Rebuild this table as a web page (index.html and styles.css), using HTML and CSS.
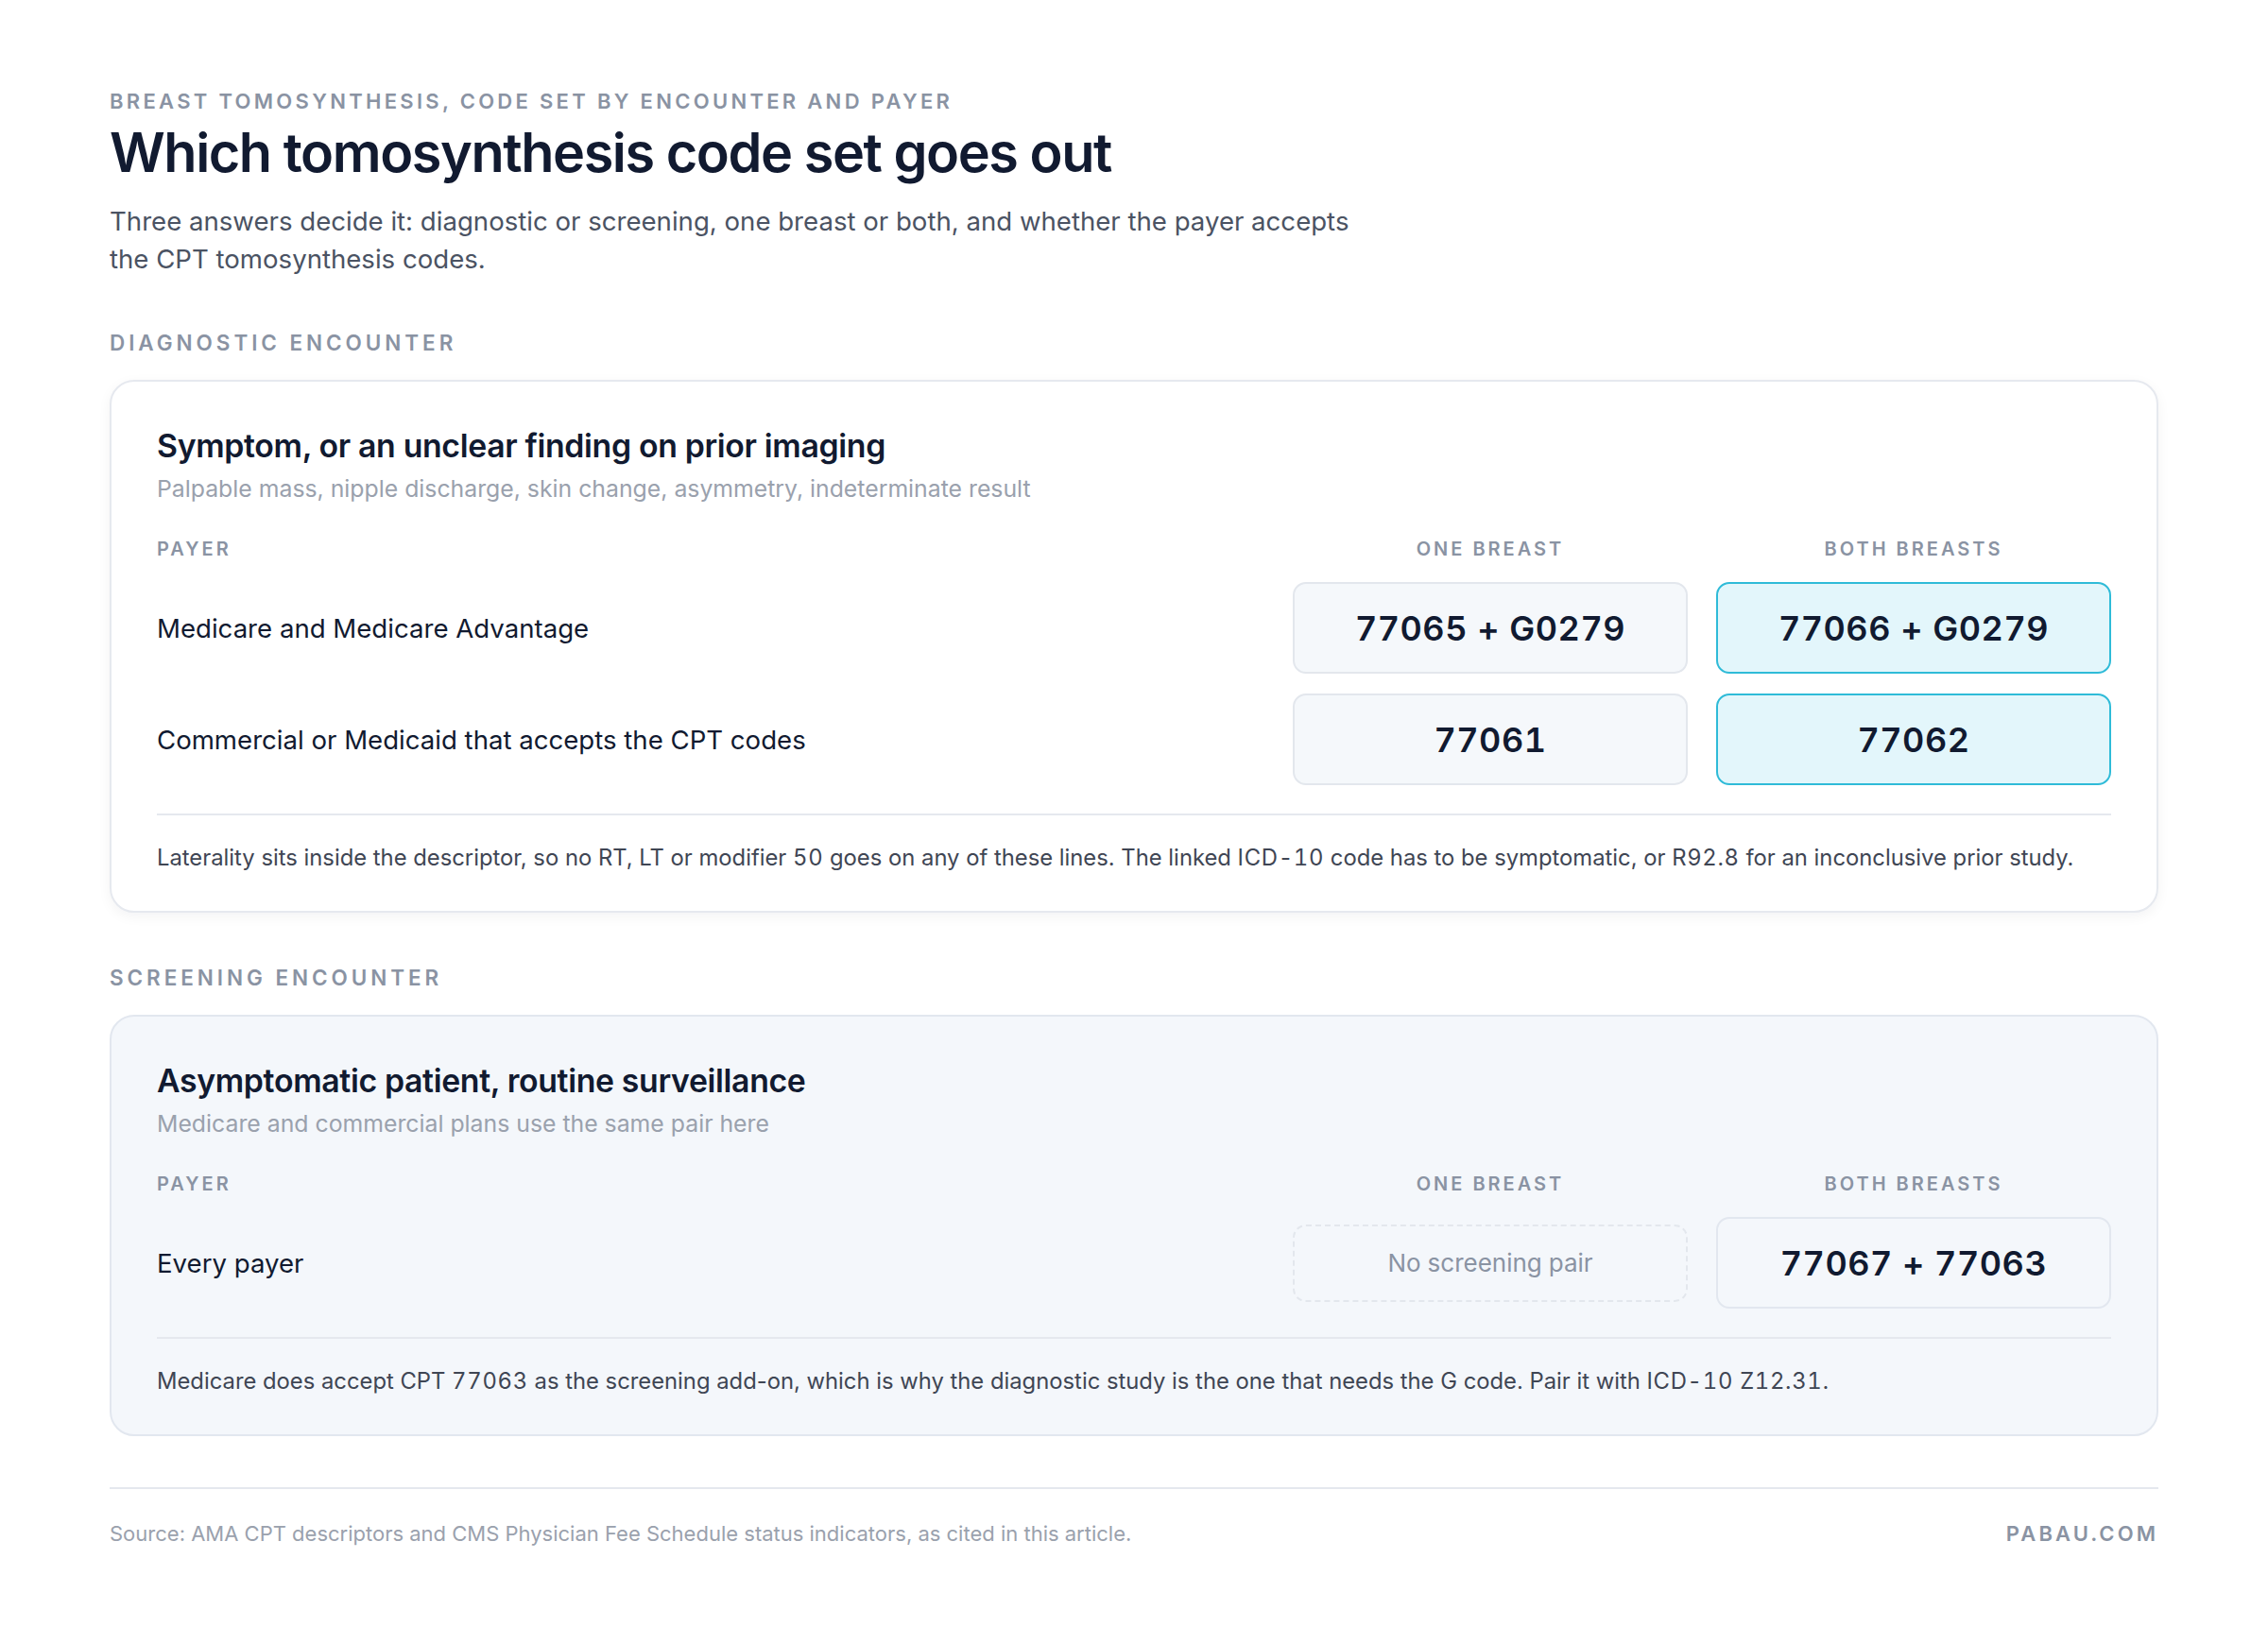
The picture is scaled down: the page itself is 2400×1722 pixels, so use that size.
FILE: index.html
```html
<!DOCTYPE html>
<html lang="en">
<head>
<meta charset="utf-8">
<title>Which tomosynthesis code set goes out</title>
<link rel="stylesheet" href="styles.css">
</head>
<body>
<main class="page">
  <header class="intro">
    <p class="eyebrow">Breast tomosynthesis, code set by encounter and payer</p>
    <h1 class="title">Which tomosynthesis code set goes out</h1>
    <p class="lede">Three answers decide it: diagnostic or screening, one breast or both, and whether the payer accepts the CPT tomosynthesis codes.</p>
  </header>

  <section class="section">
    <h2 class="section-label">Diagnostic encounter</h2>
    <div class="card card-white">
      <h3 class="card-title">Symptom, or an unclear finding on prior imaging</h3>
      <p class="card-sub">Palpable mass, nipple discharge, skin change, asymmetry, indeterminate result</p>
      <div class="grid">
        <div class="col-head">Payer</div>
        <div class="col-head center">One breast</div>
        <div class="col-head center">Both breasts</div>

        <div class="payer">Medicare and Medicare Advantage</div>
        <div class="code">77065 + G0279</div>
        <div class="code code-hi">77066 + G0279</div>

        <div class="payer">Commercial or Medicaid that accepts the CPT codes</div>
        <div class="code">77061</div>
        <div class="code code-hi">77062</div>
      </div>
      <p class="note">Laterality sits inside the descriptor, so no RT, LT or modifier <span class="num">50</span> goes on any of these lines. The linked <span class="num">ICD-10</span> code has to be symptomatic, or <span class="num">R92.8</span> for an inconclusive prior study.</p>
    </div>
  </section>

  <section class="section">
    <h2 class="section-label">Screening encounter</h2>
    <div class="card card-tint">
      <h3 class="card-title">Asymptomatic patient, routine surveillance</h3>
      <p class="card-sub">Medicare and commercial plans use the same pair here</p>
      <div class="grid">
        <div class="col-head">Payer</div>
        <div class="col-head center">One breast</div>
        <div class="col-head center">Both breasts</div>

        <div class="payer">Every payer</div>
        <div class="code code-empty">No screening pair</div>
        <div class="code code-plain">77067 + 77063</div>
      </div>
      <p class="note">Medicare does accept CPT <span class="num">77063</span> as the screening add-on, which is why the diagnostic study is the one that needs the G code. Pair it with <span class="num">ICD-10 Z12.31</span>.</p>
    </div>
  </section>

  <footer class="footer">
    <p class="source">Source: AMA CPT descriptors and CMS Physician Fee Schedule status indicators, as cited in this article.</p>
    <p class="brand">PABAU.COM</p>
  </footer>
</main>
</body>
</html>
```

FILE: styles.css
```css
* { box-sizing: border-box; }

html, body {
  margin: 0;
  padding: 0;
  background: #ffffff;
}

body {
  font-family: Inter, "Noto Sans", "Liberation Sans", sans-serif;
  color: #0f1a2e;
}

.page {
  width: 2400px;
  padding: 95px 116px 60px;
}

.intro { margin: 0; }

.eyebrow {
  margin: 0;
  font-size: 22px;
  line-height: 24px;
  font-weight: 600;
  letter-spacing: 0.15em;
  text-transform: uppercase;
  color: #8a93a3;
}

.title {
  margin: 9px 0 0;
  font-size: 57.6px;
  line-height: 66px;
  font-weight: 600;
  letter-spacing: -0.025em;
  color: #111a30;
}

.lede {
  margin: 20px 0 0;
  max-width: 1335px;
  font-size: 27.6px;
  line-height: 40px;
  font-weight: 400;
  color: #4b5363;
}

.section { margin-top: 57px; }
.section + .section { margin-top: 57px; }

.section-label {
  margin: 0 0 27px;
  font-size: 22.5px;
  line-height: 24px;
  font-weight: 600;
  letter-spacing: 0.175em;
  text-transform: uppercase;
  color: #8a93a3;
}

.card {
  border-radius: 26px;
  padding: 48px 48px 38px 48px;
  border: 2px solid #e6e9ef;
}

.card-white {
  background: #ffffff;
  box-shadow: 0 4px 14px rgba(15, 23, 42, 0.05);
}

.card-tint {
  background: #f4f7fb;
  border-color: #e2e7ef;
}

.card-title {
  margin: 0;
  font-size: 33.8px;
  line-height: 40px;
  font-weight: 600;
  letter-spacing: -0.01em;
  color: #111a30;
}

.card-sub {
  margin: 8px 0 0;
  font-size: 24.8px;
  line-height: 34px;
  font-weight: 400;
  color: #9aa1ad;
}

.grid {
  display: grid;
  grid-template-columns: 1fr 418px 418px;
  column-gap: 30px;
  row-gap: 21px;
  margin: 35px 0 0;
  align-items: center;
}

.col-head {
  font-size: 20px;
  line-height: 24px;
  font-weight: 600;
  letter-spacing: 0.15em;
  text-transform: uppercase;
  color: #8a93a3;
  margin-bottom: 2px;
}

.center { text-align: center; }

.payer {
  font-size: 27.6px;
  line-height: 36px;
  font-weight: 400;
  color: #111a30;
}

.code {
  height: 97px;
  display: flex;
  align-items: center;
  justify-content: center;
  border-radius: 14px;
  border: 2px solid #e3e7ed;
  background: #f5f8fb;
  font-size: 36px;
  font-weight: 600;
  letter-spacing: 0.015em;
  color: #111a30;
  font-variant-numeric: tabular-nums;
}

.code-hi {
  background: #e3f6fb;
  border-color: #2fbbd8;
}

.code-plain {
  background: #f4f7fb;
  border-color: #e2e7ef;
}

.code-empty {
  height: 82px;
  background: transparent;
  border: 2px dashed #e3e7ed;
  font-size: 26px;
  font-weight: 400;
  letter-spacing: 0;
  color: #8a93a3;
}

.note {
  margin: 30px 0 0;
  padding-top: 27px;
  border-top: 2px solid #e5e8ee;
  font-size: 23.8px;
  line-height: 36px;
  font-weight: 400;
  color: #3f4654;
}

.num {
  font-variant-numeric: tabular-nums;
  letter-spacing: 0.03em;
}

.footer {
  margin-top: 54px;
  border-top: 2px solid #e5e8ee;
  padding-top: 34px;
  display: flex;
  justify-content: space-between;
  align-items: center;
}

.source {
  margin: 0;
  font-size: 22px;
  line-height: 26px;
  color: #9aa1ad;
}

.brand {
  margin: 0;
  font-size: 22px;
  line-height: 26px;
  font-weight: 600;
  letter-spacing: 0.14em;
  color: #8a93a3;
}
```
